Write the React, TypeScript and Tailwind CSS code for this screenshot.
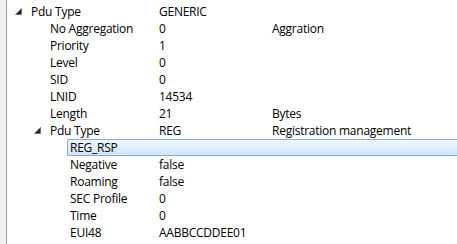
import React from "react";

type Row = {
  name: string;
  value?: string;
  desc?: string;
  level: number;
  expander?: boolean;
  selected?: boolean;
};

const rows: Row[] = [
  { name: "Pdu Type", value: "GENERIC", level: 0, expander: true },
  { name: "No Aggregation", value: "0", desc: "Aggration", level: 1 },
  { name: "Priority", value: "1", level: 1 },
  { name: "Level", value: "0", level: 1 },
  { name: "SID", value: "0", level: 1 },
  { name: "LNID", value: "14534", level: 1 },
  { name: "Length", value: "21", desc: "Bytes", level: 1 },
  { name: "Pdu Type", value: "REG", desc: "Registration management", level: 1, expander: true },
  { name: "REG_RSP", level: 2, selected: true },
  { name: "Negative", value: "false", level: 2 },
  { name: "Roaming", value: "false", level: 2 },
  { name: "SEC Profile", value: "0", level: 2 },
  { name: "Time", value: "0", level: 2 },
  { name: "EUI48", value: "AABBCCDDEE01", level: 2 },
];

function Expander() {
  return (
    <svg width="7" height="7" viewBox="0 0 7 7" className="block">
      <polygon points="6.5,0.5 6.5,6.5 0.5,6.5" fill="#262626" stroke="#595959" strokeWidth="0.6" />
    </svg>
  );
}

function TreeRow({ r }: { r: Row }) {
  const indentName = r.level === 0 ? "w-[24px]" : r.level === 1 ? "w-[43px]" : "w-[63px]";
  if (r.selected) {
    return (
      <div className="flex h-[17px] items-stretch">
        <div className="w-[60px] shrink-0" />
        <div className="flex-1 flex items-center rounded-l-[2px] border border-r-0 border-[#84acdd] bg-gradient-to-b from-[#f1f7fe] to-[#d2e5fc] pl-[2px] leading-[15px]">
          {r.name}
        </div>
      </div>
    );
  }
  return (
    <div className="flex h-[17px] items-center leading-[17px]">
      <div className="flex w-[152px] shrink-0 items-center">
        <div className={`${indentName} shrink-0 flex items-center justify-end pr-[9px]`}>
          {r.expander ? <Expander /> : null}
        </div>
        <span className="whitespace-nowrap">{r.name}</span>
      </div>
      <div className="w-[113px] shrink-0 whitespace-nowrap">{r.value}</div>
      <div className="whitespace-nowrap">{r.desc}</div>
    </div>
  );
}

export default function App() {
  return (
    <div
      className="flex h-[244px] w-[457px] overflow-hidden bg-white text-[12px] tracking-[-0.25px] text-black"
      style={{ fontFamily: '"Open Sans", "Noto Sans", sans-serif' }}
    >
      <div className="w-[7px] shrink-0 border-r border-[#a0a0a0] bg-[#f0f0f0]" />
      <div className="flex flex-1 flex-col pt-[3px]">
        {rows.map((r, i) => (
          <TreeRow key={i} r={r} />
        ))}
      </div>
    </div>
  );
}
